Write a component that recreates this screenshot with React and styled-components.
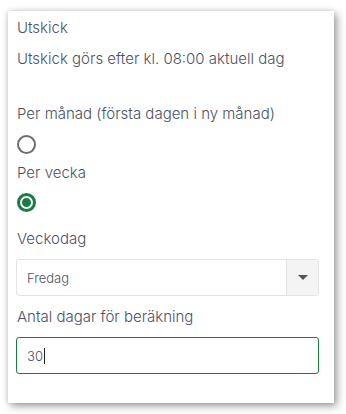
import React from "react";
import styled, { createGlobalStyle } from "styled-components";

const Global = createGlobalStyle`
  html, body { margin: 0; padding: 0; background: #ffffff; }
  body { font-family: Inter, "Noto Sans", sans-serif; }
`;

const Page = styled.div`
  padding: 11px 12px 11px 8px;
`;

const Card = styled.div`
  width: 326px;
  height: 392px;
  box-sizing: border-box;
  background: #fff;
  padding: 5px 15px 0 8px;
  box-shadow: 3px 3px 8px rgba(0, 0, 0, 0.38), -1px 0 5px rgba(0, 0, 0, 0.12);
  display: flex;
  flex-direction: column;
  color: #505664;
`;

const Text = styled.div`
  font-size: 15px;
  font-weight: 300;
  line-height: 20px;
  padding-left: 1px;
  margin-top: ${(p) => p.$mt || 0}px;
  color: #4c5262;
`;

const Radio = styled.span`
  display: block;
  box-sizing: border-box;
  width: 19px;
  height: 19px;
  margin-left: 1px;
  margin-top: ${(p) => p.$mt || 0}px;
  border-radius: 50%;
  border: 2px solid ${(p) => (p.$checked ? "#1c7c44" : "#6e6e6e")};
  background: ${(p) => (p.$checked ? "#1c7c44" : "#fff")};
  position: relative;
  ${(p) =>
    p.$checked &&
    `
    &::after {
      content: "";
      position: absolute;
      inset: 1px;
      border-radius: 50%;
      border: 2px solid #fff;
      background: #1c7c44;
    }
  `}
`;

const Select = styled.div`
  margin-top: ${(p) => p.$mt || 0}px;
  height: 37px;
  box-sizing: border-box;
  border: 1px solid #e3e3e3;
  border-radius: 3px;
  display: flex;
  align-items: stretch;
  overflow: hidden;
`;

const SelectValue = styled.div`
  flex: 1;
  display: flex;
  align-items: center;
  padding-left: 10px;
  font-size: 13px;
  font-weight: 300;
  color: #4c5262;
`;

const ArrowBox = styled.div`
  width: 31px;
  background: #f4f4f4;
  border-left: 1px solid #e3e3e3;
  display: flex;
  align-items: center;
  justify-content: center;
`;

const Input = styled.div`
  margin-top: ${(p) => p.$mt || 0}px;
  height: 37px;
  box-sizing: border-box;
  border: 1px solid #1c7c44;
  border-radius: 3px;
  display: flex;
  align-items: center;
  padding-left: 10px;
  font-size: 13px;
  font-weight: 300;
  color: #48506a;
`;

const Caret = styled.span`
  display: inline-block;
  width: 1px;
  height: 16px;
  background: #222;
  margin-left: 1px;
`;

export default function App() {
  return (
    <>
      <Global />
      <Page>
        <Card>
          <Text $mt={2}>Utskick</Text>
          <Text $mt={11}>Utskick görs efter kl. 08:00 aktuell dag</Text>
          <Text $mt={35}>Per månad (första dagen i ny månad)</Text>
          <Radio $mt={11} />
          <Text $mt={9}>Per vecka</Text>
          <Radio $mt={10} $checked />
          <Text $mt={17}>Veckodag</Text>
          <Select $mt={10}>
            <SelectValue>Fredag</SelectValue>
            <ArrowBox>
              <svg width="10" height="5" viewBox="0 0 10 5">
                <path d="M0 0 L10 0 L5 5 Z" fill="#555" />
              </svg>
            </ArrowBox>
          </Select>
          <Text $mt={11}>Antal dagar för beräkning</Text>
          <Input $mt={10}>
            30<Caret />
          </Input>
        </Card>
      </Page>
    </>
  );
}
